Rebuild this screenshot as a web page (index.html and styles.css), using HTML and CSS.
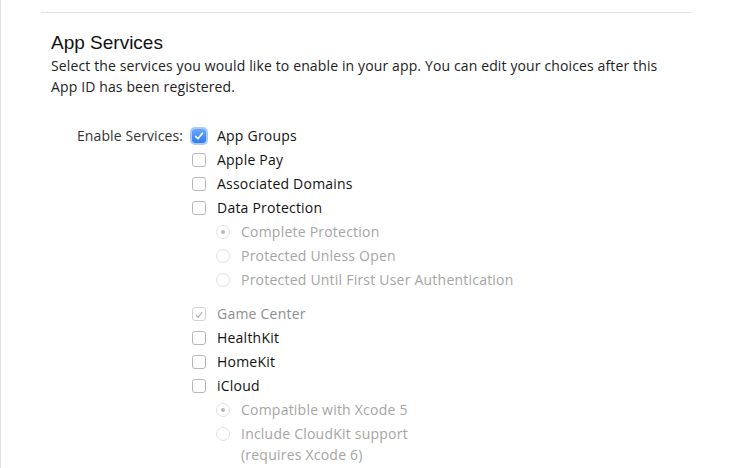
FILE: index.html
```html
<!DOCTYPE html>
<html>
<head>
<meta charset="utf-8">
<link rel="stylesheet" href="styles.css">
</head>
<body>
<div class="page">
  <div class="section">
    <div class="rule"></div>
    <h2 class="title">App Services</h2>
    <p class="desc">Select the services you would like to enable in your app. You can edit your choices after this App ID has been registered.</p>
    <div class="form">
      <div class="label">Enable Services:</div>
      <div class="options">
        <div class="row"><span class="cb checked"><svg viewBox="0 0 14 14" width="14" height="14"><path d="M3.6 7.4 L6 9.8 L10.4 4.2" fill="none" stroke="#fff" stroke-width="1.6" stroke-linecap="round" stroke-linejoin="round"/></svg></span><span class="text">App Groups</span></div>
        <div class="row"><span class="cb"></span><span class="text">Apple Pay</span></div>
        <div class="row"><span class="cb"></span><span class="text">Associated Domains</span></div>
        <div class="row"><span class="cb"></span><span class="text">Data Protection</span></div>
        <div class="sub">
          <div class="row"><span class="rb on"></span><span class="text dim">Complete Protection</span></div>
          <div class="row"><span class="rb"></span><span class="text dim">Protected Unless Open</span></div>
          <div class="row"><span class="rb"></span><span class="text dim">Protected Until First User Authentication</span></div>
        </div>
        <div class="row gapped"><span class="cb disabled"><svg viewBox="0 0 14 14" width="14" height="14"><path d="M3.6 7.2 L6 9.8 L10.6 3.8" fill="none" stroke="#a8a8a8" stroke-width="1.2" stroke-linecap="round" stroke-linejoin="round"/></svg></span><span class="text dim2">Game Center</span></div>
        <div class="row"><span class="cb"></span><span class="text">HealthKit</span></div>
        <div class="row"><span class="cb"></span><span class="text">HomeKit</span></div>
        <div class="row"><span class="cb"></span><span class="text">iCloud</span></div>
        <div class="sub">
          <div class="row"><span class="rb on"></span><span class="text dim">Compatible with Xcode 5</span></div>
          <div class="row top"><span class="rb"></span><span class="text dim">Include CloudKit support<br>(requires Xcode 6)</span></div>
        </div>
      </div>
    </div>
  </div>
</div>
</body>
</html>
```
FILE: styles.css
```css
html, body {
  margin: 0;
  padding: 0;
  background: #fff;
}
body {
  font-family: "Open Sans", "Liberation Sans", Arial, sans-serif;
  color: #222;
}
.page {
  border-left: 1px solid #e2e2e2;
  height: 468px;
  overflow: hidden;
  box-sizing: border-box;
  padding: 12px 0 0 40px;
}
.section {
  width: 650px;
}
.rule {
  height: 1px;
  background: #e0e0e0;
}
.title {
  margin: 18px 0 0 10px;
  font-family: "Liberation Sans", Arial, sans-serif;
  font-size: 19px;
  font-weight: normal;
  line-height: 24px;
  color: #111;
}
.desc {
  margin: 0 0 0 10px;
  width: 625px;
  font-size: 14px;
  letter-spacing: 0.13px;
  line-height: 21px;
  color: #222;
}
.form {
  display: flex;
  margin-top: 27px;
}
.label {
  width: 142px;
  text-align: right;
  font-size: 14px;
  letter-spacing: 0.1px;
  line-height: 24px;
  color: #333;
  padding-right: 9px;
}
.options {
  display: flex;
  flex-direction: column;
}
.row {
  display: flex;
  align-items: center;
  height: 24px;
  font-size: 14px;
  letter-spacing: 0.22px;
}
.row.gapped {
  margin-top: 10px;
}
.row.top {
  align-items: flex-start;
  height: auto;
}
.row.top .rb {
  margin-top: 5px;
}
.text {
  line-height: 24px;
  color: #111;
}
.row.top .text {
  line-height: 21px;
  margin-top: 1px;
}
.text.dim {
  color: #a5a5a5;
}
.text.dim2 {
  color: #8e8e8e;
}
.cb {
  box-sizing: border-box;
  width: 14px;
  height: 14px;
  border: 1px solid #b8b8b8;
  border-radius: 3px;
  background: #fff;
  margin-right: 11px;
  display: flex;
}
.cb.checked {
  border: none;
  background: linear-gradient(#6aa8fb, #2c7cf6);
  box-shadow: 0 0 0 2px #a9cbf9;
}
.cb.disabled {
  border-color: #d4d4d4;
}
.sub {
  padding-left: 24px;
}
.rb {
  box-sizing: border-box;
  width: 14px;
  height: 14px;
  border: 1px solid #e0e0e0;
  border-radius: 50%;
  margin-right: 11px;
  position: relative;
  background: #fff;
}
.rb.on::after {
  content: "";
  position: absolute;
  left: 4px;
  top: 4px;
  width: 4px;
  height: 4px;
  border-radius: 50%;
  background: #b8b8b8;
}
```
